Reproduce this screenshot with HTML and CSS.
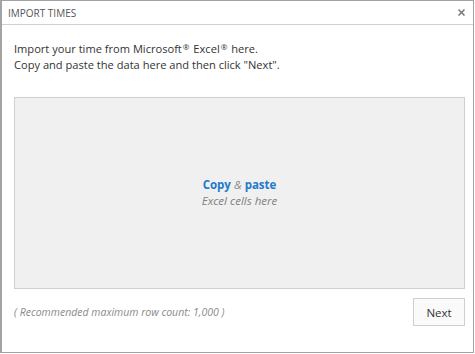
FILE: index.html
```html
<!DOCTYPE html>
<html lang="en">
<head>
    <meta charset="UTF-8">
    <meta name="viewport" content="width=device-width, initial-scale=1.0">
    <title>Import Times</title>
    <link rel="stylesheet" href="styles.css">
</head>
<body>
    <div class="dialog">
        <div class="dialog-header">
            <span class="dialog-title">IMPORT TIMES</span>
            <button class="close-button" aria-label="Close">
                <svg width="7" height="7" viewBox="0 0 7 7"><path d="M0.5 0.5 L6.5 6.5 M6.5 0.5 L0.5 6.5" stroke="#777" stroke-width="1.5"/></svg>
            </button>
        </div>
        <div class="dialog-body">
            <p class="intro">Import your time from Microsoft<sup>®</sup> Excel<sup>®</sup> here.<br>Copy and paste the data here and then click "Next".</p>
            <div class="paste-area">
                <div class="paste-title">Copy <em>&amp;</em> paste</div>
                <div class="paste-hint">Excel cells here</div>
            </div>
            <div class="dialog-footer">
                <span class="row-note">( Recommended maximum row count: 1,000 )</span>
                <button class="next-button">Next</button>
            </div>
        </div>
    </div>
</body>
</html>
```

FILE: styles.css
```css
html, body {
    margin: 0;
    padding: 0;
    background: #fff;
}
body {
    font-family: "Open Sans", "Noto Sans", sans-serif;
    color: #333;
}
.dialog {
    width: 474px;
    height: 353px;
    box-sizing: border-box;
    border: 1px solid #a3a3a3;
    border-left: 2px solid #a3a3a3;
    display: flex;
    flex-direction: column;
}
.dialog-header {
    height: 24px;
    box-sizing: border-box;
    border-bottom: 1px solid #d0d0d0;
    display: flex;
    align-items: center;
    justify-content: space-between;
    padding: 0 7px 0 6px;
}
.dialog-title {
    font-size: 10px;
    color: #555;
}
.close-button {
    border: none;
    background: none;
    padding: 0;
    width: 9px;
    height: 9px;
    display: flex;
    align-items: center;
    justify-content: center;
}
.dialog-body {
    flex: 1;
    padding: 16px 8px 0 12px;
    display: flex;
    flex-direction: column;
}
.intro {
    margin: 0;
    font-size: 11.1px;
    line-height: 16px;
    color: #333;
}
.intro sup {
    font-size: 8px;
    vertical-align: 3px;
    line-height: 0;
    margin: 0 1px;
}
.paste-area {
    margin-top: 24px;
    height: 192px;
    box-sizing: border-box;
    border: 1px solid #cfcfcf;
    background: #f0f0f0;
    display: flex;
    flex-direction: column;
    align-items: center;
    justify-content: center;
}
.paste-title {
    font-size: 11.5px;
    font-weight: bold;
    color: #1e7acb;
    line-height: 16px;
}
.paste-title em {
    font-weight: normal;
    color: #888;
}
.paste-hint {
    font-size: 11.5px;
    font-style: italic;
    color: #808080;
    line-height: 16px;
}
.dialog-footer {
    margin-top: 9px;
    display: flex;
    align-items: center;
    justify-content: space-between;
}
.row-note {
    font-size: 10.5px;
    font-style: italic;
    color: #8a8a8a;
}
.next-button {
    width: 52px;
    height: 28px;
    border: 1px solid #cfcfcf;
    background: #fafafa;
    font-family: inherit;
    font-size: 11.5px;
    color: #333;
    padding: 0;
}
```
